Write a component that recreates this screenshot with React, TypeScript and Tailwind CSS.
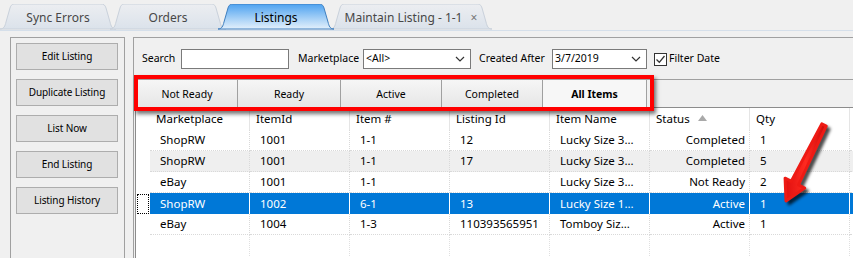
import React from "react";

const font = "font-['Noto_Sans','DejaVu_Sans',sans-serif]";

type Row = {
  market: string;
  itemId: string;
  itemNo: string;
  listingId: string;
  name: string;
  status: string;
  qty: string;
};

const rows: Row[] = [
  { market: "ShopRW", itemId: "1001", itemNo: "1-1", listingId: "12", name: "Lucky Size 3...", status: "Completed", qty: "1" },
  { market: "ShopRW", itemId: "1001", itemNo: "1-1", listingId: "17", name: "Lucky Size 3...", status: "Completed", qty: "5" },
  { market: "eBay", itemId: "1001", itemNo: "1-1", listingId: "", name: "Lucky Size 3...", status: "Not Ready", qty: "2" },
  { market: "ShopRW", itemId: "1002", itemNo: "6-1", listingId: "13", name: "Lucky Size 1...", status: "Active", qty: "1" },
  { market: "eBay", itemId: "1004", itemNo: "1-3", listingId: "110393565951", name: "Tomboy Siz...", status: "Active", qty: "1" },
];

function TabShape({ w, active }: { w: number; active?: boolean }) {
  const d = `M0 25 C4 25 5 22 6 18 L10 4 C11 1 12 0 16 0 L${w - 16} 0 C${w - 12} 0 ${w - 11} 1 ${w - 10} 4 L${w - 6} 18 C${w - 5} 22 ${w - 4} 25 ${w} 25 Z`;
  const id = active ? "tabA" : "tabI";
  return (
    <svg className="absolute inset-0" width={w} height={26} viewBox={`0 0 ${w} 26`}>
      <defs>
        <linearGradient id="tabA" x1="0" y1="0" x2="0" y2="1">
          <stop offset="0" stopColor="#4da2f0" />
          <stop offset="0.6" stopColor="#a9d2f7" />
          <stop offset="1" stopColor="#e3f0fc" />
        </linearGradient>
        <linearGradient id="tabI" x1="0" y1="0" x2="0" y2="1">
          <stop offset="0" stopColor="#eceef1" />
          <stop offset="1" stopColor="#dbe2eb" />
        </linearGradient>
      </defs>
      <path d={d} fill={`url(#${id})`} stroke={active ? "#3f7fbf" : "#c9d1db"} strokeWidth="1" />
    </svg>
  );
}

function Tab({ label, w, active, close, className }: { label: string; w: number; active?: boolean; close?: boolean; className?: string }) {
  return (
    <div className={`relative h-[26px] shrink-0 ${className ?? ""}`} style={{ width: w }}>
      <TabShape w={w} active={active} />
      <div className={`relative flex h-full items-center justify-center pt-[1px] text-[12px] ${active ? "text-black" : "text-[#474747]"}`}>
        {label}
        {close && <span className="ml-[8px] text-[12px] text-[#777]">×</span>}
      </div>
    </div>
  );
}

function SideButton({ label }: { label: string }) {
  return (
    <button className="flex h-[27px] w-[102px] shrink-0 items-center justify-center whitespace-nowrap border border-[#adadad] bg-[#e1e1e1] text-[10px] tracking-[-0.1px] text-black">
      {label}
    </button>
  );
}

function Chevron() {
  return (
    <svg width="10" height="6" viewBox="0 0 10 6" className="shrink-0">
      <path d="M1 1 L5 5 L9 1" fill="none" stroke="#333" strokeWidth="1.2" />
    </svg>
  );
}

const segs = [
  { label: "Not Ready", w: 101 },
  { label: "Ready", w: 103 },
  { label: "Active", w: 101 },
  { label: "Completed", w: 101 },
  { label: "All Items", w: 104, on: true },
];

const cols: { key: keyof Row; title: string; right?: boolean }[] = [
  { key: "market", title: "Marketplace" },
  { key: "itemId", title: "ItemId" },
  { key: "itemNo", title: "Item #" },
  { key: "listingId", title: "Listing Id" },
  { key: "name", title: "Item Name" },
  { key: "status", title: "Status", right: true },
  { key: "qty", title: "Qty" },
];

export default function App() {
  return (
    <div className={`relative h-[258px] w-[853px] overflow-hidden bg-[#f0f0f0] ${font} text-[10.5px] text-black`}>
      {/* tabs */}
      <div className="flex h-[31px] items-end border-b border-[#d5dfea]">
        <Tab label="Sync Errors" w={116} />
        <Tab label="Orders" w={116} className="-ml-[6px]" />
        <Tab label="Listings" w={116} active className="z-10 -ml-[8px]" />
        <Tab label="Maintain Listing - 1-1" w={162} close className="-ml-[4px]" />
      </div>

      <div className="flex h-[227px] pl-[10px] pt-[6px]">
        {/* left actions */}
        <div className="flex h-full w-[115px] shrink-0 flex-col gap-[9px] border border-b-0 border-[#a0a0a0] pl-[5px] pt-[5px]">
          <SideButton label="Edit Listing" />
          <SideButton label="Duplicate Listing" />
          <SideButton label="List Now" />
          <SideButton label="End Listing" />
          <SideButton label="Listing History" />
        </div>

        {/* main panel */}
        <div className="ml-[8px] flex h-full min-w-0 flex-1 flex-col border-l border-t border-[#a0a0a0]">
          <div className="mt-[11px] flex h-[20px] items-center whitespace-nowrap pl-[8px]">
            <span className="w-[39px] shrink-0">Search</span>
            <div className="h-[20px] w-[108px] shrink-0 border border-[#7a7a7a] bg-white" />
            <span className="ml-[9px] w-[65px] shrink-0">Marketplace</span>
            <div className="flex h-[20px] w-[108px] shrink-0 items-center justify-between border border-[#7a7a7a] bg-white pl-[2px] pr-[5px]">
              <span>&lt;All&gt;</span>
              <Chevron />
            </div>
            <span className="ml-[8px] w-[73px] shrink-0">Created After</span>
            <div className="flex h-[20px] w-[95px] shrink-0 items-center justify-between border border-[#7a7a7a] bg-white pl-[2px] pr-[5px]">
              <span>3/7/2019</span>
              <Chevron />
            </div>
            <div className="ml-[7px] flex h-[13px] w-[13px] shrink-0 items-center justify-center border border-[#333] bg-white">
              <svg width="11" height="11" viewBox="0 0 11 11">
                <path d="M1.5 5.5 L4.3 8.3 L9.5 2" fill="none" stroke="#333" strokeWidth="1.3" />
              </svg>
            </div>
            <span className="ml-[2px]">Filter Date</span>
          </div>

          {/* status segments */}
          <div className="ml-[3px] mt-[10px] flex h-[28px] border-t border-[#a0a0a0]">
            {segs.map((s) => (
              <div
                key={s.label}
                className={`flex h-full shrink-0 items-center justify-center border-r border-[#a0a0a0] pt-[3px] ${s.on ? "bg-[#f7f7f7] font-bold" : "bg-gradient-to-b from-[#f6f6f6] to-[#e6e6e6]"}`}
                style={{ width: s.w }}
              >
                {s.label}
              </div>
            ))}
          </div>

          {/* grid */}
          <div className="ml-[1px] flex-1 overflow-hidden border-l border-t border-[#8c8c8c] bg-white text-[11.5px]">
            <div className="flex h-[22px] items-center">
              <div className="h-full w-[14px] shrink-0" />
              {cols.map((c) => (
                <div key={c.key} className="flex h-full w-[100px] shrink-0 items-center border-r border-[#e5e5e5] pl-[6px]">
                  {c.title}
                  {c.key === "status" && (
                    <svg width="9" height="6" viewBox="0 0 9 6" className="mb-[2px] ml-[8px]">
                      <path d="M0 6 L4.5 0 L9 6 Z" fill="#a9a9a9" />
                    </svg>
                  )}
                </div>
              ))}
              <div className="h-full w-[10px] shrink-0" />
            </div>
            {rows.map((r, i) => {
              const sel = i === 3;
              const alt = i === 1;
              return (
                <div key={i} className="flex h-[21px]">
                  <div className="flex h-full w-[14px] shrink-0 items-center pl-[1px]">
                    {sel && <div className="h-[20px] w-[12px] border border-dotted border-black" />}
                  </div>
                  {cols.map((c) => (
                    <div
                      key={c.key}
                      className={`flex h-full w-[100px] shrink-0 items-center whitespace-nowrap ${
                        sel
                          ? "border-r border-white bg-[#0078d7] text-white"
                          : `border-b border-r border-dotted border-[#d9d9d9] ${alt ? "bg-[#efefef]" : "bg-white"}`
                      } ${c.right ? "justify-end pr-[4px]" : "pl-[10px]"}`}
                    >
                      {r[c.key]}
                    </div>
                  ))}
                  <div
                    className={`h-full w-[10px] shrink-0 ${
                      sel ? "bg-[#0078d7]" : `border-b border-dotted border-[#d9d9d9] ${alt ? "bg-[#efefef]" : "bg-white"}`
                    }`}
                  />
                </div>
              );
            })}
            <div className="flex h-[21px]">
              <div className="w-[14px] shrink-0" />
              {cols.map((c) => (
                <div key={c.key} className="h-full w-[100px] shrink-0 border-r border-dotted border-[#e0e0e0]" />
              ))}
            </div>
          </div>
        </div>
      </div>

      {/* annotation: red box */}
      <div className="pointer-events-none absolute left-[134px] top-[75px] h-[36px] w-[520px] border-[4px] border-[#ff0000] shadow-[2px_3px_4px_rgba(0,0,0,0.55)]" />

      {/* annotation: arrow */}
      <svg className="pointer-events-none absolute left-0 top-0" width="853" height="258" viewBox="0 0 853 258">
        <defs>
          <filter id="blur" x="-50%" y="-50%" width="200%" height="200%">
            <feGaussianBlur stdDeviation="1.6" />
          </filter>
          <linearGradient id="arr" x1="0" y1="0" x2="1" y2="0">
            <stop offset="0" stopColor="#e01010" />
            <stop offset="0.5" stopColor="#ff2a20" />
            <stop offset="1" stopColor="#c80a0a" />
          </linearGradient>
        </defs>
        <polygon
          points="821.8,123.9 791.3,181.3 785.1,178.2 786,201 804.7,188 798.5,184.9 826.2,126.1"
          fill="rgba(0,0,0,0.6)"
          stroke="rgba(0,0,0,0.6)"
          strokeWidth="3"
          strokeLinejoin="round"
          transform="translate(3,3)"
          filter="url(#blur)"
        />
        <polygon
          points="821.8,123.9 791.3,181.3 785.1,178.2 786,201 804.7,188 798.5,184.9 826.2,126.1"
          fill="url(#arr)"
          stroke="#ee1a14"
          strokeWidth="3"
          strokeLinejoin="round"
        />
      </svg>
    </div>
  );
}
